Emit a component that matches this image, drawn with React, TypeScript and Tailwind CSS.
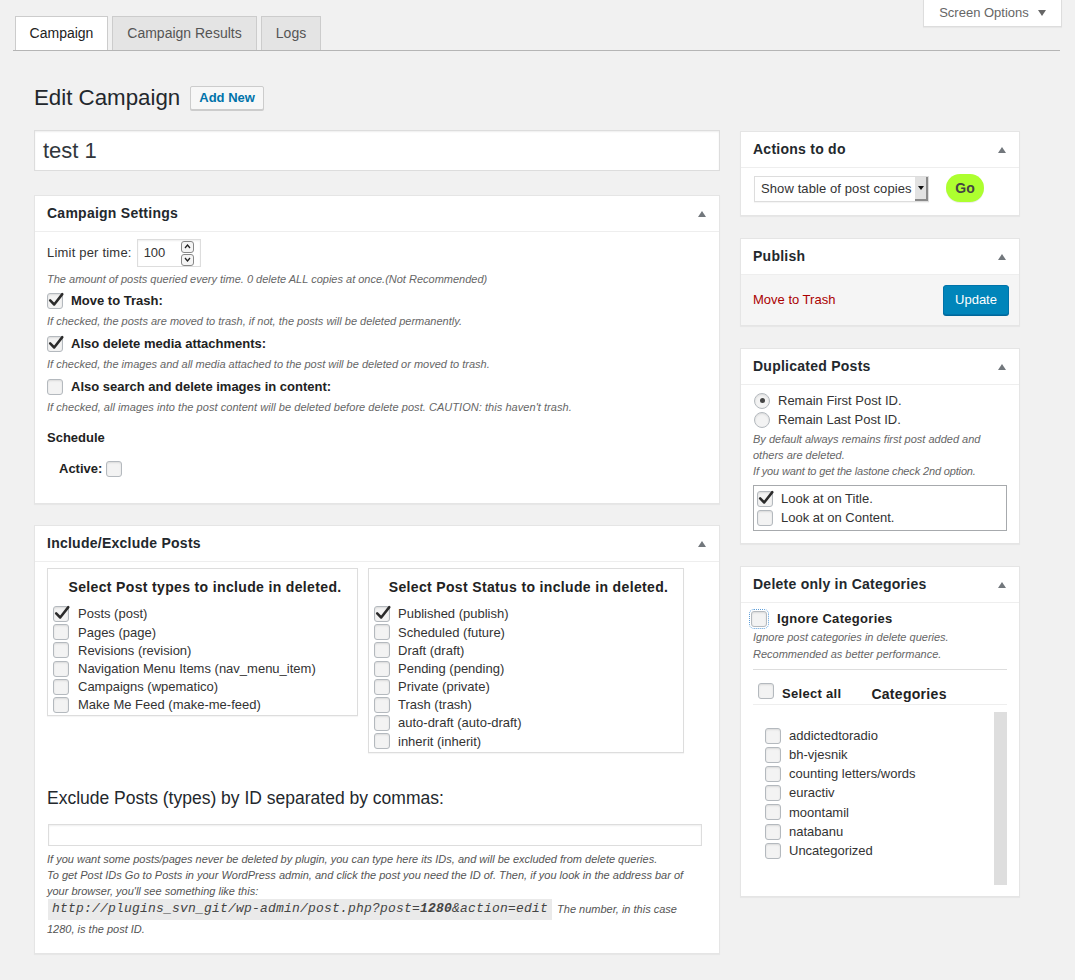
import React from "react";
import clsx from "clsx";

// small helpers for the WP admin look
const Check = ({ checked, focus }: { checked?: boolean; focus?: boolean }) => (
  <span
    className={clsx(
      "relative inline-block h-4 w-4 shrink-0 rounded-[3px] border border-[#b4b9be] bg-[#f3f3f3] shadow-[inset_0_1px_2px_rgba(0,0,0,0.1)]",
      focus && "outline outline-1 outline-offset-1 outline-dotted outline-[#5b9dd9]"
    )}
  >
    {checked && (
      <svg className="absolute -left-px -top-[3px] h-[18px] w-[18px]" viewBox="0 0 20 20" fill="none">
        <path d="M3.5 10.5 L8 15 L17 3.5" stroke="#2b2b2b" strokeWidth="2.8" strokeLinecap="round" strokeLinejoin="round" />
      </svg>
    )}
  </span>
);

const Radio = ({ checked }: { checked?: boolean }) => (
  <span className="flex h-4 w-4 shrink-0 items-center justify-center rounded-full border border-[#b4b9be] bg-[#f3f3f3] shadow-[inset_0_1px_2px_rgba(0,0,0,0.1)]">
    {checked && <span className="h-[5px] w-[5px] rounded-full bg-[#444]" />}
  </span>
);

const Arrow = () => (
  <svg width="8" height="6" viewBox="0 0 8 6">
    <polygon points="0,6 4,0 8,6" fill="#72777c" />
  </svg>
);

const Panel = ({ title, children, className }: { title: string; children: React.ReactNode; className?: string }) => (
  <div className={clsx("border border-[#e5e5e5] bg-white shadow-[0_1px_1px_rgba(0,0,0,0.04)]", className)}>
    <div className="flex h-[36px] items-center justify-between border-b border-[#eee] pl-3 pr-[13px]">
      <h2 className="text-[14px] font-bold tracking-[0.25px] text-[#23282d]">{title}</h2>
      <Arrow />
    </div>
    {children}
  </div>
);

const Desc = ({ children, className }: { children: React.ReactNode; className?: string }) => (
  <div className={clsx("h-4 text-[11px] italic leading-4 text-[#666]", className)}>{children}</div>
);

const CheckRow = ({ checked, label, className }: { checked?: boolean; label: string; className?: string }) => (
  <div className={clsx("flex h-[18px] items-center gap-2", className)}>
    <Check checked={checked} />
    <span className="font-bold text-[#222]">{label}</span>
  </div>
);

const postTypes = [
  ["Posts (post)", true],
  ["Pages (page)", false],
  ["Revisions (revision)", false],
  ["Navigation Menu Items (nav_menu_item)", false],
  ["Campaigns (wpematico)", false],
  ["Make Me Feed (make-me-feed)", false],
] as const;

const postStatus = [
  ["Published (publish)", true],
  ["Scheduled (future)", false],
  ["Draft (draft)", false],
  ["Pending (pending)", false],
  ["Private (private)", false],
  ["Trash (trash)", false],
  ["auto-draft (auto-draft)", false],
  ["inherit (inherit)", false],
] as const;

const categories = ["addictedtoradio", "bh-vjesnik", "counting letters/words", "euractiv", "moontamil", "natabanu", "Uncategorized"];

export default function App() {
  return (
    <div className="relative min-h-[980px] w-[1075px] bg-[#f1f1f1] font-['Liberation_Sans',Arial,sans-serif] text-[13px] text-[#333]">
      {/* screen options */}
      <div className="absolute right-[13px] top-0 flex h-[27px] w-[139px] items-center justify-center gap-[9px] border border-t-0 border-[#ddd] bg-white text-[13px] text-[#666] shadow-[0_1px_1px_rgba(0,0,0,0.04)]">
        Screen Options
        <svg width="8" height="6" viewBox="0 0 8 6">
          <polygon points="0,0 8,0 4,6" fill="#666" />
        </svg>
      </div>

      {/* tabs */}
      <div className="ml-[13px] flex w-[1047px] gap-1 border-b border-[#b5b5b5] pl-[2px] pt-4">
        <div className="flex h-[34px] w-[93px] items-center justify-center border border-b-0 border-[#ccc] bg-white text-[14px] text-[#222]">Campaign</div>
        <div className="flex h-[34px] w-[145px] items-center justify-center border border-b-0 border-[#ccc] bg-[#e4e4e4] text-[14px] text-[#555]">Campaign Results</div>
        <div className="flex h-[34px] w-[60px] items-center justify-center border border-b-0 border-[#ccc] bg-[#e4e4e4] text-[14px] text-[#555]">Logs</div>
      </div>

      <div className="pl-[34px]">
        <div className="mt-[33px] flex h-[28px] items-center gap-[10px]">
          <h1 className="text-[22.3px] leading-[28px] text-[#23282d]">Edit Campaign</h1>
          <button className="h-6 rounded-[2px] border border-[#ccc] bg-[#f7f7f7] px-2 text-[13px] font-bold text-[#0073aa] shadow-[0_1px_0_#ccc]">Add New</button>
        </div>

        <div className="mt-[18px] flex items-start gap-5">
          {/* main column */}
          <div className="w-[686px]">
            <div className="flex h-[41px] items-center border border-[#ddd] bg-white pl-2 text-[22px] text-[#32373c] shadow-[inset_0_1px_2px_rgba(0,0,0,0.07)]">test 1</div>

            <Panel title="Campaign Settings" className="mt-6">
              <div className="px-3 pb-[25px] pt-[7px]">
                <div className="flex h-[28px] items-center gap-[5px]">
                  <span className="tracking-[0.2px]">Limit per time:</span>
                  <div className="flex h-[28px] w-[64px] items-center justify-between border border-[#ddd] bg-white pl-[6px] pr-[6px] text-[13px] shadow-[inset_0_1px_2px_rgba(0,0,0,0.07)]">
                    100
                    <div className="flex flex-col gap-px">
                      <span className="flex h-[12px] w-[13px] items-center justify-center rounded-[3px] border border-[#888] bg-[#f5f5f5]">
                        <svg width="7" height="5" viewBox="0 0 7 5"><path d="M1 4 L3.5 1 L6 4" stroke="#222" fill="none" strokeWidth="1.3" /></svg>
                      </span>
                      <span className="flex h-[12px] w-[13px] items-center justify-center rounded-[3px] border border-[#888] bg-[#f5f5f5]">
                        <svg width="7" height="5" viewBox="0 0 7 5"><path d="M1 1 L3.5 4 L6 1" stroke="#222" fill="none" strokeWidth="1.3" /></svg>
                      </span>
                    </div>
                  </div>
                </div>
                <Desc className="mt-1">The amount of posts queried every time. 0 delete ALL copies at once.(Not Recommended)</Desc>
                <CheckRow className="mt-[5px]" checked label="Move to Trash:" />
                <Desc className="mt-[3px]">If checked, the posts are moved to trash, if not, the posts will be deleted permanently.</Desc>
                <CheckRow className="mt-[6px]" checked label="Also delete media attachments:" />
                <Desc className="mt-[3px]">If checked, the images and all media attached to the post will be deleted or moved to trash.</Desc>
                <CheckRow className="mt-[6px]" label="Also search and delete images in content:" />
                <Desc className="mt-[3px] tracking-[0.05px]">If checked, all images into the post content will be deleted before delete post. CAUTION: this haven't trash.</Desc>
                <div className="mt-[14px] h-[18px] font-bold leading-[18px] text-[#222]">Schedule</div>
                <div className="mt-[13px] flex h-[18px] items-center gap-1 pl-3">
                  <span className="font-bold text-[#222]">Active:</span>
                  <Check />
                </div>
              </div>
            </Panel>

            <Panel title="Include/Exclude Posts" className="mt-[21px]">
              <div className="px-3 pb-[16px] pt-[6px]">
                <div className="flex items-start gap-[10px]">
                  <div className="w-[311px] border border-[#ddd] pb-px pl-[5px] pt-2 shadow-[0_1px_1px_rgba(0,0,0,0.04)]">
                    <div className="h-5 text-center text-[14px] font-bold leading-5 tracking-[0.35px] text-[#222]">Select Post types to include in deleted.</div>
                    <div className="mt-2">
                      {postTypes.map(([label, on]) => (
                        <div key={label} className="flex h-[18.2px] items-center gap-[9px]">
                          <Check checked={on} />
                          <span>{label}</span>
                        </div>
                      ))}
                    </div>
                  </div>
                  <div className="w-[316px] border border-[#ddd] pb-px pl-[5px] pt-2 shadow-[0_1px_1px_rgba(0,0,0,0.04)]">
                    <div className="h-5 text-center text-[14px] font-bold leading-5 tracking-[0.35px] text-[#222]">Select Post Status to include in deleted.</div>
                    <div className="mt-2">
                      {postStatus.map(([label, on]) => (
                        <div key={label} className="flex h-[18.2px] items-center gap-2">
                          <Check checked={on} />
                          <span>{label}</span>
                        </div>
                      ))}
                    </div>
                  </div>
                </div>

                <h3 className="mt-[33px] h-6 text-[17.5px] leading-6 text-[#23282d]">Exclude Posts (types) by ID separated by commas:</h3>
                <div className="ml-px mt-[14px] h-[22px] w-[654px] border border-[#ddd] bg-white shadow-[inset_0_1px_2px_rgba(0,0,0,0.07)]" />
                <div className="mt-[5px] text-[11px] italic leading-4 text-[#555]">
                  <div className="whitespace-nowrap">If you want some posts/pages never be deleted by plugin, you can type here its IDs, and will be excluded from delete queries.</div>
                  <div className="whitespace-nowrap">To get Post IDs Go to Posts in your WordPress admin, and click the post you need the ID of. Then, if you look in the address bar of</div>
                  <div className="whitespace-nowrap">your browser, you'll see something like this:</div>
                  <div className="flex h-[21px] items-center gap-[5px] whitespace-nowrap">
                    <code className="ml-px flex h-[21px] items-center bg-[#eaeaea] px-[4px] font-['Liberation_Mono',monospace] text-[13px] tracking-[0.2px] text-[#444]">
                      <span>http://plugins_svn_git/wp-admin/post.php?post=</span>
                      <b>1280</b>
                      <span>&amp;action=edit</span>
                    </code>
                    <span>The number, in this case</span>
                  </div>
                  <div className="mt-px whitespace-nowrap">1280, is the post ID.</div>
                </div>
              </div>
            </Panel>
          </div>

          {/* sidebar */}
          <div className="mt-px w-[280px]">
            <Panel title="Actions to do">
              <div className="flex items-end gap-[17px] px-3 pb-[13px] pt-[6px]">
                <div className="ml-px flex h-[26px] w-[175px] items-center justify-between border border-[#ddd] bg-white pl-[6px] text-[#333] shadow-[0_1px_1px_rgba(0,0,0,0.04)]">
                  <span className="tracking-[0.1px]">Show table of post copies</span>
                  <span className="flex h-full w-[13px] items-center justify-center border-b-2 border-r-2 border-[#8a8a8a] bg-[#e2e2e2]">
                    <svg width="6" height="4" viewBox="0 0 6 4"><polygon points="0,0 6,0 3,4" fill="#111" /></svg>
                  </span>
                </div>
                <button className="h-[28px] w-[38px] rounded-full bg-[#adff2f] text-[14px] font-bold text-[#444] shadow-[0_1px_0_rgba(0,0,0,0.08)]">Go</button>
              </div>
            </Panel>

            <Panel title="Publish" className="mt-[22px]">
              <div className="flex h-[50px] items-center justify-between bg-[#f5f5f5] pl-3 pr-[10px]">
                <span className="text-[#a00]">Move to Trash</span>
                <button className="h-[30px] w-[66px] rounded-[3px] border border-[#0073aa] bg-[#0085ba] text-[13px] text-white shadow-[0_1px_0_#006799]">Update</button>
              </div>
            </Panel>

            <Panel title="Duplicated Posts" className="mt-[22px]">
              <div className="px-3 pb-3 pt-[6px]">
                <div className="ml-px flex h-[19px] items-center gap-2">
                  <Radio checked />
                  <span>Remain First Post ID.</span>
                </div>
                <div className="ml-px flex h-[19px] items-center gap-2">
                  <Radio />
                  <span>Remain Last Post ID.</span>
                </div>
                <div className="mt-[2px] text-[11px] italic leading-4 text-[#666]">
                  <div>By default always remains first post added and</div>
                  <div>others are deleted.</div>
                  <div className="tracking-[-0.15px]">If you want to get the lastone check 2nd option.</div>
                </div>
                <div className="mt-[6px] border border-[#a7aaad] py-[3px] pl-[3px]">
                  <div className="flex h-[19px] items-center gap-2">
                    <Check checked />
                    <span>Look at on Title.</span>
                  </div>
                  <div className="flex h-[19px] items-center gap-2">
                    <Check />
                    <span>Look at on Content.</span>
                  </div>
                </div>
              </div>
            </Panel>

            <Panel title="Delete only in Categories" className="mt-[22px]">
              <div className="px-3 pb-[11px] pt-[7px]">
                <div className="-ml-[2px] flex h-[18px] items-center gap-[10px]">
                  <Check focus />
                  <span className="font-bold tracking-[0.3px] text-[#222]">Ignore Categories</span>
                </div>
                <div className="mt-px text-[11px] italic leading-[17px] text-[#666]">
                  <div>Ignore post categories in delete queries.</div>
                  <div>Recommended as better performance.</div>
                </div>
                <div className="mt-[6px] h-px bg-[#ddd]" />
                <div className="mt-[14px] flex h-5 items-center">
                  <span className="ml-[5px]"><Check /></span>
                  <span className="ml-2 font-bold tracking-[0.3px] text-[#222]">Select all</span>
                  <span className="ml-[30px] text-[14px] font-bold tracking-[0.3px] text-[#222]">Categories</span>
                </div>
                <div className="h-px bg-[#eee]" />
                <div className="mt-[7px] flex h-[173px]">
                  <div className="flex-1 pl-3 pt-[14px]">
                    {categories.map((c) => (
                      <div key={c} className="flex h-[19.2px] items-center gap-2">
                        <Check />
                        <span>{c}</span>
                      </div>
                    ))}
                  </div>
                  <div className="w-[13px] bg-[#dedede]" />
                </div>
              </div>
            </Panel>
          </div>
        </div>
      </div>
    </div>
  );
}
